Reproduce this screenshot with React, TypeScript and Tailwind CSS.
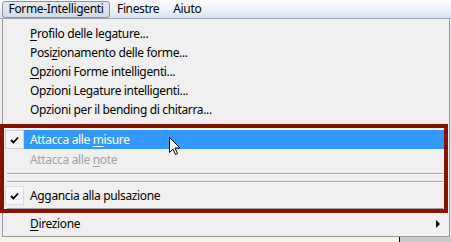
import React from "react"

type Item = { label: React.ReactNode; checked?: boolean; active?: boolean; disabled?: boolean; submenu?: boolean; h?: string }

function U({ children }: { children: React.ReactNode }) {
  return <span className="underline underline-offset-[2px]">{children}</span>
}

function Check({ active }: { active?: boolean }) {
  return (
    <div
      className={`flex h-[19px] w-[19px] shrink-0 items-center justify-center border ${
        active ? "border-[#d0d0d0] bg-[#f4f4f4]" : "border-[#dcdcdc] bg-[#f7f7f7]"
      }`}
    >
      <svg width="9" height="8" viewBox="0 0 9 8">
        <path d="M1 4 L3.5 6.5 L8 1.5" stroke="#000" strokeWidth="1.8" fill="none" />
      </svg>
    </div>
  )
}

function Row({ label, checked, active, disabled, submenu, h = "h-[19px]" }: Item) {
  return (
    <div className={`flex ${h} items-center pl-[2px] pr-[4px]`}>
      <div className="flex w-[19px] shrink-0 items-center">{checked ? <Check active={active} /> : null}</div>
      <div
        className={`flex h-[19px] flex-1 items-center pl-[6px] ${active ? "bg-[#3399ff] text-white" : ""} ${
          disabled ? "text-[#a3a3a3]" : ""
        }`}
      >
        <span className="flex-1">{label}</span>
        {submenu ? (
          <svg width="5" height="8" viewBox="0 0 5 8" className="mr-[4px]">
            <path d="M0 0 L4 4 L0 8 Z" fill="#000" />
          </svg>
        ) : null}
      </div>
    </div>
  )
}

function Sep() {
  return (
    <div className="pl-[4px] pr-[6px]">
      <div className="h-px bg-[#a0a0a0]" />
      <div className="h-px bg-white" />
    </div>
  )
}

export default function App() {
  const top: React.ReactNode[] = [
    <><U>P</U>rofilo delle legature...</>,
    <>Posi<U>z</U>ionamento delle forme...</>,
    <><U>O</U>pzioni Forme intelligenti...</>,
    <>Opzioni Legature intelligenti...</>,
    <>Opzioni per il bending di chitarra...</>,
  ]

  return (
    <div
      className="relative h-[242px] w-[451px] overflow-hidden bg-[#f0f0f0] text-[12px] tracking-[-0.35px] text-black"
      style={{ fontFamily: '"Noto Sans", "Open Sans", sans-serif' }}
    >
      {/* menu bar */}
      <div className="flex h-[19px] items-center border-b border-[#a0a6b4] bg-gradient-to-b from-[#fbfcfe] via-[#eef2fa] to-[#d9e2f3] pl-[2px]">
        <div className="flex h-[17px] w-[108px] items-center justify-center rounded-[3px] border border-[#8e8f8f] bg-gradient-to-b from-[#e4e9f2] to-[#d4dbe8]">
          Forme-Intelligenti
        </div>
        <div className="ml-[7px]">Finestre</div>
        <div className="ml-[14px]">Aiuto</div>
      </div>

      {/* dropdown */}
      <div className="ml-[2px] w-[448px] border-x border-b border-[#979797] bg-[#f0f0f0] pt-[5px] pb-[3px]">
        {top.map((t, i) => (
          <Row key={i} label={t} />
        ))}
        <div className="h-[11px]" />
        <Row label={<>Attacca alle <U>m</U>isure</>} checked active />
        <Row label={<>Attacca alle <U>n</U>ote</>} disabled h="h-[21px]" />
        <div className="h-[3px]" />
        <Sep />
        <div className="h-[6px]" />
        <Sep />
        <div className="h-[3px]" />
        <Row label="Aggancia alla pulsazione" checked />
        <div className="h-[3px]" />
        <Sep />
        <div className="h-[4px]" />
        <Row label={<><U>D</U>irezione</>} submenu />
      </div>

      {/* strip under the menu */}
      <div className="flex h-[6px]">
        <div className="w-[399px] bg-[#f6f2e4]" />
        <div className="w-px bg-black" />
        <div className="flex-1 bg-[#cacaca]" />
      </div>

      {/* annotation frame */}
      <div className="pointer-events-none absolute left-0 top-[124px] h-[89px] w-[448px] border-[4px] border-[#861104]" />

      {/* mouse cursor */}
      <svg className="absolute left-[169px] top-[137px]" width="13" height="20" viewBox="0 0 13 20">
        <path
          d="M0.5 0.5 L0.5 15.5 L4 12 L6.5 17.5 L8.5 16.5 L6 11 L11 11 Z"
          fill="#fff"
          stroke="#000"
          strokeWidth="1"
          strokeLinejoin="round"
        />
      </svg>
    </div>
  )
}
